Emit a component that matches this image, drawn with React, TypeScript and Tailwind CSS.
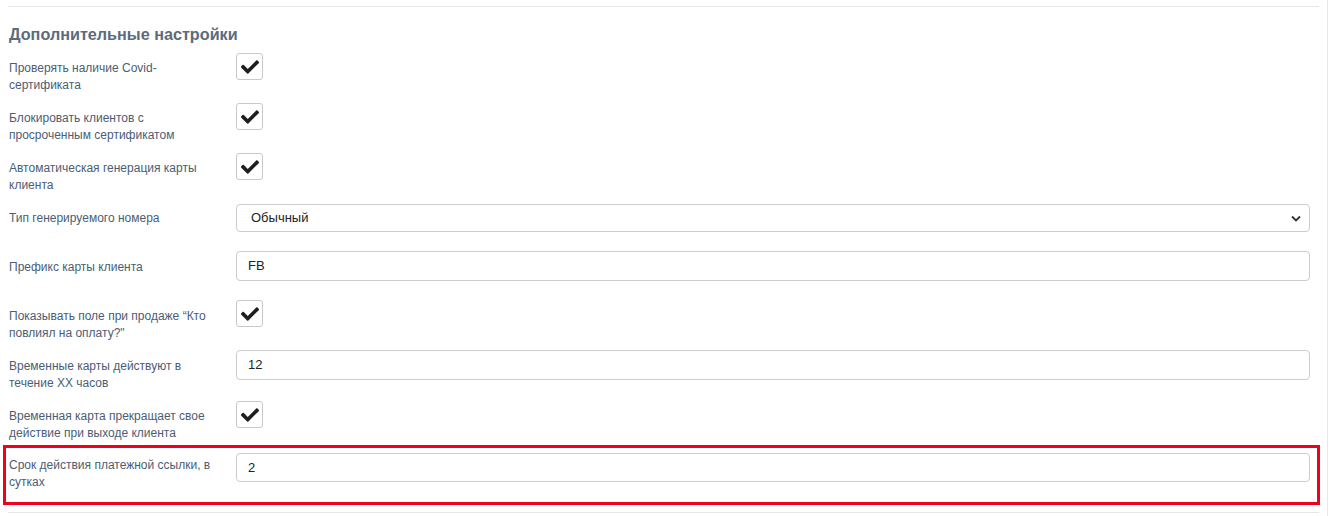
import React from "react";

const font = { fontFamily: '"Liberation Sans", Arial, sans-serif' };

function Check() {
  return (
    <div className="w-[27px] h-[27px] border border-[#c9c9c9] rounded-[3px] bg-white flex items-center justify-center">
      <svg width="18" height="15" viewBox="0 0 512 420" fill="#1e1e1e">
        <path d="M173.9 408.4L7.5 242c-10-10-10-26.2 0-36.2l36.2-36.2c10-10 26.2-10 36.2 0L192 281.7 432.1 41.6c10-10 26.2-10 36.2 0l36.2 36.2c10 10 10 26.2 0 36.2L210.1 408.4c-10 10-26.2 10-36.2 0z" />
      </svg>
    </div>
  );
}

function Label({ children, pt = "pt-[7px]" }: { children: React.ReactNode; pt?: string }) {
  return (
    <div className={`w-[227px] shrink-0 text-[12px] leading-[17px] text-[#4b5d74] pr-4 ${pt}`}>{children}</div>
  );
}

function TextInput({ value, h = "h-[30px]" }: { value: string; h?: string }) {
  return (
    <div className={`flex-1 ${h} border border-[#cccccc] rounded-[4px] bg-white flex items-center pl-[11px] text-[13px] text-[#222]`}>
      {value}
    </div>
  );
}

export default function App() {
  return (
    <div className="w-[1329px] h-[516px] bg-white relative overflow-hidden" style={font}>
      <div className="absolute right-[1px] top-0 bottom-0 w-px bg-[#e8e8ec]" />
      <div className="pl-[8px] pr-[10px]">
        <div className="h-[6px]" />
        <div className="h-px bg-[#e6e6e6]" />
        <div className="h-[46px] flex items-end pb-[9px] pl-[1px]">
          <h2 className="text-[16.2px] font-bold text-[#5c6b7c] leading-[20px]">Дополнительные настройки</h2>
        </div>
        <div className="pl-[1px] pr-[9px]">
          <div className="flex items-start h-[50px]">
            <Label>Проверять наличие Covid-сертификата</Label>
            <Check />
          </div>
          <div className="flex items-start h-[50px]">
            <Label>Блокировать клиентов с просроченным сертификатом</Label>
            <Check />
          </div>
          <div className="flex items-start h-[51px]">
            <Label>Автоматическая генерация карты клиента</Label>
            <Check />
          </div>
          <div className="flex items-start h-[47px]">
            <div className="w-[227px] shrink-0 h-[28px] flex items-center text-[12px] text-[#4b5d74]">Тип генерируемого номера</div>
            <div className="flex-1 h-[28px] border border-[#cccccc] rounded-[4px] bg-white flex items-center justify-between pl-[14px] pr-[8px] text-[13px] text-[#222]">
              <span>Обычный</span>
              <svg width="10" height="7" viewBox="0 0 10 7">
                <path d="M1 1.5 L5 5.5 L9 1.5" stroke="#333" strokeWidth="1.8" fill="none" />
              </svg>
            </div>
          </div>
          <div className="flex items-start h-[49px]">
            <div className="w-[227px] shrink-0 h-[30px] flex items-center pt-[1px] text-[12px] text-[#4b5d74]">Префикс карты клиента</div>
            <TextInput value="FB" />
          </div>
          <div className="flex items-start h-[50px]">
            <Label pt="pt-[8px]">Показывать поле при продаже “Кто повлиял на оплату?"</Label>
            <Check />
          </div>
          <div className="flex items-start h-[51px]">
            <Label pt="pt-[8px]">Временные карты действуют в течение XX часов</Label>
            <TextInput value="12" />
          </div>
          <div className="flex items-start h-[44px]">
            <Label>Временная карта прекращает свое действие при выходе клиента</Label>
            <Check />
          </div>
        </div>
        <div className="-ml-[5px] -mr-[1px] h-[60px] border-[3px] border-[#f2001b] pt-[5px] pl-[3px] pr-[7px]">
          <div className="flex items-start">
            <Label pt="pt-[4px]">Срок действия платежной ссылки, в сутках</Label>
            <TextInput value="2" h="h-[29px]" />
          </div>
        </div>
        <div className="h-[7px]" />
        <div className="h-px bg-[#e6e6e6]" />
      </div>
    </div>
  );
}
